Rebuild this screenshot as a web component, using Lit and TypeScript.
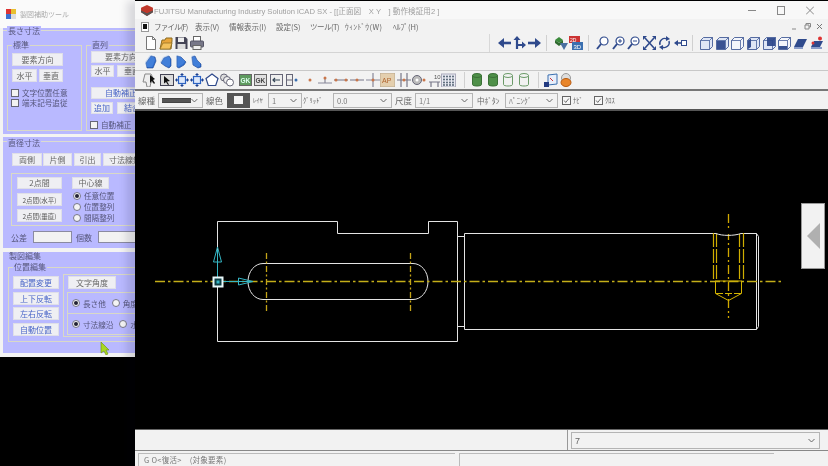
import { LitElement, html, css, svg } from "lit";
import { customElement } from "lit/decorators.js";

const NAVY = "#2f4a8c";
const i = (w: number, body: unknown) =>
  html`<svg class="ic" width=${w} height="14" viewBox="0 0 ${w} 14">${body}</svg>`;

const doc = i(12, svg`<path d="M1.5.5h6l3 3v10h-9z" fill="#fff" stroke="#777"/><path d="M7.5.5v3h3" fill="none" stroke="#777"/>`);
const folder = i(14, svg`<path d="M1 13 3 4h3l1-2h6v3l-1 8z" fill="#e8a53a" stroke="#8a6a20"/><path d="M1 13l3-6h9l-2 6z" fill="#f2c15c" stroke="#8a6a20" stroke-width=".7"/>`);
const floppy = i(13, svg`<path d="M.5 1h10l2 2v10H.5z" fill="#445"/><rect x="3" y="1.5" width="6" height="4.5" fill="#eee"/><rect x="2.5" y="8" width="8" height="5" fill="#ddd"/>`);
const printer = i(14, svg`<rect x="3.5" y=".5" width="7" height="5" fill="#fff" stroke="#666"/><rect x=".5" y="5" width="13" height="6" rx="1" fill="#778" stroke="#556"/><rect x="3" y="9.5" width="8" height="4" fill="#eee" stroke="#666"/>`);

const blob = (d: string) => i(12, svg`<path d=${d} fill="#2f6fd0" stroke="#17408f" stroke-width=".6"/><path d=${d} fill="#6fa7ee" opacity=".3" transform="translate(-1 -1)"/>`);
const blobs = [
  blob("M2 13 1 8l5-7 4 1 1 4-3 7z"),
  blob("M9 1l2 3v7l-2 2-4-2-4-3 3-5z"),
  blob("M2 1l4 1 5 5-2 3-5 3-2-1z"),
  blob("M2 2l3-1 2 4 4 4v3l-3 1-5-3z"),
];

const arrowL = i(14, svg`<path d="M13 7H5" stroke=${NAVY} stroke-width="2.6"/><path d="M0 7l6-5v10z" fill=${NAVY}/>`);
const arrowR = i(14, svg`<path d="M1 7h8" stroke=${NAVY} stroke-width="2.6"/><path d="M14 7 8 2v10z" fill=${NAVY}/>`);
const arrowX = i(13, svg`<path d="M4 13V3M3 9h8" stroke=${NAVY} stroke-width="2.2"/><path d="M4 0 .5 4h7zM13 9l-4-3.5v7z" fill=${NAVY}/>`);
const tree = i(14, svg`<path d="M1 4l4-3 4 3-4 3z" fill="#3b8a3b"/><path d="M1 4v3l4 3V7zM9 4v3l-4 3V7z" fill="#2f6a2f"/><path d="M6 7h8l-4 7z" fill="#4a6fa0"/>`);
const view3d = i(14, svg`<rect y="0" width="11" height="7" fill="#c33"/><rect x="3" y="6" width="11" height="8" fill="#3a6fb0"/><text x="1" y="5.5" font-size="5" fill="#fff" font-family="Liberation Sans">2D</text><text x="4.5" y="12.500" font-size="6" fill="#fff" font-family="Liberation Sans">3D</text>`);
const lens = (inner: unknown) => i(13, svg`<circle cx="8" cy="5" r="4" fill="#fff" stroke=${NAVY} stroke-width="1.2"/><path d="M5 8 1 13" stroke=${NAVY} stroke-width="2"/>${inner}`);
const zoomA = lens("");
const zoomP = lens(svg`<path d="M6 5h4M8 3v4" stroke=${NAVY}/>`);
const zoomM = lens(svg`<path d="M6 5h4" stroke=${NAVY}/>`);
const fit = i(13, svg`<path d="M2 2l9 10M11 2 2 12" stroke=${NAVY} stroke-width="1.6"/><path d="M0 0h4L0 4zM13 0H9l4 4zM0 14h4l-4-4zM13 14H9l4-4z" fill=${NAVY}/>`);
const rot = i(13, svg`<path d="M2 9a5 5 0 0 1 7-6M11 5a5 5 0 0 1-7 6" fill="none" stroke=${NAVY} stroke-width="1.4"/><path d="M8 0l4 3-4 2zM5 14l-4-3 4-2z" fill=${NAVY}/>`);
const back = i(13, svg`<path d="M0 7l4-3v6z" fill=${NAVY}/><path d="M3 7h4" stroke=${NAVY} stroke-width="1.6"/><rect x="7.500" y="4.500" width="5" height="5" fill="#fff" stroke=${NAVY}/>`);
const cube = (fill: string, face: string) => i(13, svg`<path d="M.5 4.500l3-3h9v9l-3 3h-9z" fill=${fill} stroke=${NAVY} stroke-width=".8"/><path d=${face} fill=${NAVY} opacity=".95"/><path d="M.5 4.500h9v9M9.500 4.500l3-3" fill="none" stroke=${NAVY} stroke-width=".7"/>`);
const cubes = [
  cube("#dfe6f5", ""),
  cube("#dfe6f5", "M1 5h8v8H1z"),
  cube("#f4f6fb", ""),
  cube("#dfe6f5", "M1 5l3-3v9l-3 2z"),
  cube("#dfe6f5", "M4 2h8v8H4z"),
  cube("#f4f6fb", "M1 10h8v3H1z"),
];
const book = i(13, svg`<path d="M0 11 4 3h9l-4 8z" fill=${NAVY}/><path d="M0 11h9v2H0z" fill="#8a9cc8"/>`);
const wiz = i(14, svg`<path d="M1 11 4 5h9l-3 6z" fill=${NAVY}/><circle cx="10" cy="2.500" r="2" fill="#d33"/><circle cx="3" cy="7" r="1.500" fill="#d33"/><rect x="1" y="11" width="11" height="2" fill="#8a9cc8"/>`);

const sel1 = i(15, svg`<path d="M3 1h6l1 2 1 6H9l-1 5H5L4 9H1z" fill="#eee" stroke="#888"/><path d="M8 2l5 4-2 1 2 3-1 1-2-3-2 2z" fill="#111"/>`);
const sel2 = i(14, svg`<rect x=".5" y="1.500" width="13" height="11" fill="#ddd" stroke="#445"/><path d="M4 3l6 5-3 .5 2 3-1 .5-2-3-2 1.500z" fill="#111"/>`);
const crossB = i(14, svg`<path d="M7 1v12M1 7h12" stroke="#2d62c0" stroke-width="1.4"/><rect x="3.500" y="3.500" width="7" height="7" fill="#dde8fa" stroke="#2d62c0" stroke-width="1.200"/><path d="M7 0 5 2h4zM7 14l-2-2h4zM0 7l2-2v4zM14 7l-2-2v4z" fill="#1d3f8c"/>`);
const penta = i(14, svg`<path d="M7 1l6 4.500-2.300 7H3.300L1 5.500z" fill="#fff" stroke=${NAVY} stroke-width="1.200"/>`);
const chain = i(14, svg`<circle cx="4" cy="4.500" r="3.500" fill="#ddd" stroke="#667"/><circle cx="7" cy="7" r="3.500" fill="#eee" stroke="#667"/><circle cx="10" cy="9.500" r="3.500" fill="#fff" stroke="#667"/>`);
const gk = (bg: string, fg: string) => i(13, svg`<rect x=".5" y="1.500" width="12" height="11" fill=${bg} stroke="#666"/><text x="1.500" y="10" font-size="6.500" font-weight="700" fill=${fg} font-family="Liberation Sans">GK</text>`);
const boxL = i(13, svg`<rect x=".5" y="1.500" width="12" height="11" fill="#eee" stroke="#667"/><path d="M3 7h7M5 5 3 7l2 2" fill="none" stroke="#345" stroke-width="1.200"/>`);
const boxP = i(13, svg`<rect x=".5" y="1.500" width="6" height="11" fill="#eee" stroke="#667"/><path d="M1 7h5" stroke="#667"/><circle cx="10" cy="7" r="1.500" fill="#3a6fb0"/>`);
const dot = i(4, svg`<circle cx="2" cy="7" r="1.500" fill="#c9764a"/>`);
const lineM = (p: unknown) => i(14, svg`<path d="M0 7h14" stroke="#889" stroke-width="1.200"/>${p}`);
const ld = (x: number) => svg`<circle cx=${x} cy="7" r="1.500" fill="#c9764a"/>`;
const p1 = i(14, svg`<path d="M0 10h14M7 5v5" stroke="#889" stroke-width="1.200"/>${svg`<circle cx="7" cy="5" r="1.500" fill="#c9764a"/>`}`);
const p2 = lineM(svg`${ld(2)}${ld(12)}`);
const p3 = lineM(ld(7));
const p4 = i(14, svg`<path d="M0 7h14M7 0v14" stroke="#889" stroke-width="1.200"/>${ld(7)}`);
const ap = i(15, svg`<rect width="15" height="14" fill="#e4cfae" stroke="#b9a88e"/><text x="2" y="10" font-size="7" fill="#b0642e" font-family="Liberation Sans">AP</text>`);
const p6 = i(14, svg`<path d="M4 0v14M10 0v14M0 7h14" stroke="#778" stroke-width="1.200"/>${ld(7)}`);
const gear = i(14, svg`<circle cx="5" cy="7" r="4.500" fill="#bbb" stroke="#667"/><circle cx="5" cy="7" r="1.500" fill="#fff"/>${ld(12)}`);
const ten = i(13, svg`<path d="M1 9h11M3 9v5M10 9v5" stroke="#778" stroke-width="1.200"/><text x="6" y="6" font-size="6" fill="#555" font-family="Liberation Sans">10</text>`);
const gridI = i(15, svg`<rect x=".5" y="1" width="14" height="13" fill="#e8eaf2" stroke="#aab"/>${[3, 6, 9, 12].flatMap((x) => [3.5, 6.5, 9.5, 12].map((y) => svg`<circle cx=${x} cy=${y} r=".9" fill="#456"/>`))}`);
const cyl = (fill: string, st: string) => i(10, svg`<path d="M.5 2.500v9c0 2 9 2 9 0v-9z" fill=${fill} stroke=${st}/><ellipse cx="5" cy="2.500" rx="4.500" ry="2" fill=${fill} stroke=${st}/>`);
const flag = i(14, svg`<path d="M4 2l9-1v10l-9 1z" fill="#e8eefa" stroke="#3a6fb0"/><rect x="0" y="9" width="5" height="5" fill="#223a80"/><path d="M6 5l3 3" stroke="#c33"/>`);
const bulb = i(12, svg`<circle cx="6" cy="5" r="4.500" fill="#ddd" stroke="#999"/><ellipse cx="6" cy="9.500" rx="5" ry="4" fill="#e8852a" stroke="#b85a10"/>`);

const chev = html`<svg class="chev" width="7" height="5" viewBox="0 0 7 5"><path d="M.5 1 3.500 4l3-3" fill="none" stroke="#666"/></svg>`;

@customElement("app-root")
export class AppRoot extends LitElement {
  static styles = css`
    :host { display: block; position: relative; width: 828px; height: 466px; background: #000; overflow: hidden; filter: blur(0.3px);
      font-family: "Noto Sans CJK JP", "Liberation Sans", sans-serif; font-size: 8px; color: #666; }
    .ic { display: block; flex: none; }

    /* helper window */
    .tool { position: absolute; left: 0; top: 0; width: 135px; height: 357px; background: #f3f3f3; overflow: hidden; display: flex; flex-direction: column; }
    .ttl { height: 28px; flex: none; background: #fafafa; display: flex; align-items: center; padding-left: 6px; gap: 4px; color: #aaa; font-size: 7px; box-sizing: border-box; }
    .sec { margin-left: 3px; width: 200px; background: #b9b9ff; flex: none; box-sizing: border-box; position: relative; }
    .s1 { height: 106px; padding: 2px 0 0; }
    .s2 { height: 111px; margin-top: 3px; padding-top: 4px; }
    .s3 { height: 101px; margin-top: 4px; padding-top: 15px; }
    .topl { border-top: 1px solid #dcdccf; }
    .lg { position: absolute; background: #b9b9ff; padding: 0 1px; line-height: 10px; white-space: nowrap; color: #55557a; }
    .lgs1 { left: 4px; top: -2px; }
    .lgs2 { left: 4px; top: 1px; }
    .lgs3 { left: 5px; top: -1px; background: none; }
    .lgi { left: 4px; top: -6px; }
    .grp { position: relative; border: 1px solid #d9d9c6; box-sizing: border-box; }
    .row { display: flex; }
    .col { display: flex; flex-direction: column; }
    .b { height: 13px; flex: none; background: #efeff3; border: 1px solid #dfdfe8; box-sizing: border-box; display: flex; align-items: center; justify-content: center; white-space: nowrap; font-size: 8px; line-height: 10px; color: #666; overflow: hidden; }
    .blue { color: #4a66c8; }
    .tiny { font-size: 6.500px; color: #555; }
    .h12 { height: 12px; }
    .cb { width: 8px; height: 8px; background: #f2f2f2; border: 1px solid #667; box-sizing: border-box; flex: none; }
    .opt { display: flex; align-items: center; gap: 3px; white-space: nowrap; height: 9px; line-height: 9px; font-size: 7.600px; color: #55557a; }
    .opts { gap: 1px; }
    .rd { width: 8px; height: 8px; border-radius: 50%; background: #f4f4f4; border: 1px solid #778; box-sizing: border-box; flex: none; position: relative; }
    .rd.on::after { content: ""; position: absolute; inset: 1px; border-radius: 50%; background: #223; }
    .rd.nx { margin-left: 3px; }

    .std { margin: 14px 0 0 4px; width: 75px; height: 86px; padding: 7px 0 0 4px; flex: none; }
    .ser { margin: 14px 0 0 4px; width: 100px; height: 86px; padding: 5px 0 0 4px; flex: none; }
    .w51 { width: 51px; } .w25 { width: 25px; } .w24 { width: 24px; margin-left: 2px; }
    .w60 { width: 60px; } .w23 { width: 23px; } .w30 { width: 30px; margin-left: 3px; }
    .w22 { width: 22px; } .w30b { width: 30px; margin-left: 4px; }
    .mt3 { margin-top: 3px; } .mt2 { margin-top: 2px; } .mt10 { margin-top: 10px; } .mt6 { margin-top: 6px; }
    .nudge { margin-left: -1px; }

    .dia { padding-left: 9px; margin-top: 11px; }
    .t30 { width: 30px; } .t29 { width: 29px; margin-left: 1px; } .t27 { width: 27px; margin-left: 2px; } .t40 { width: 44px; margin-left: 2px; }
    .inner { margin: 7px 0 0 8px; height: 53px; padding: 3px 0 0 5px; border-right: 0; }
    .c45 { width: 45px; flex: none; }
    .c45 .b { width: 45px; }
    .c45 .m4 { margin-top: 4px; } .c45 .m3 { margin-top: 3px; }
    .c2 { margin-left: 10px; }
    .w37 { width: 37px; }
    .rads { margin: 2px 0 0 1px; gap: 2px; }
    .tol { margin: 5px 0 0 8px; display: flex; align-items: center; height: 12px; color: #55557a; }
    .inp { height: 12px; background: #f2f2f2; border: 1px solid #8a8aa0; box-sizing: border-box; flex: none; }
    .i39 { width: 39px; margin: 0 4px 0 6px; } .i60 { width: 60px; margin-left: 6px; }

    .pos { margin: 0 0 0 5px; height: 75px; padding: 8px 0 0 4px; display: flex; }
    .w46 { width: 46px; }
    .gap3 { gap: 3px; }
    .up1 { margin-top: -1px; }
    .rt { margin: -2px 0 0 4px; width: 100px; height: 63px; padding: 1px 0 0 4px; }
    .w48 { width: 48px; }
    .sub { margin: 3px 0 0 -1px; height: 22px; padding-left: 4px; display: flex; align-items: center; gap: 3px; white-space: nowrap; font-size: 7.600px; color: #55557a; }
    .sub + .sub { margin-top: 0; height: 21px; border-top: 0; }
    .cursor { position: absolute; left: 100px; top: 341px; }

    /* main window */
    .main { position: absolute; left: 135px; top: 1px; width: 693px; height: 465px; background: #f2f2f2; display: flex; flex-direction: column; box-shadow: -8px 0 8px rgba(0, 0, 30, 0.13); }
    .mt { height: 18px; flex: none; background: #f8f8f8; display: flex; align-items: center; padding-left: 6px; box-sizing: border-box; color: #a0a0a0; font-family: "Liberation Sans", "Noto Sans CJK JP", sans-serif; font-size: 7.650px; white-space: nowrap; }
    .mt .lab { margin-left: 1px; flex: 1; }
    .wb { display: flex; width: 80px; flex: none; justify-content: space-between; padding-right: 14px; box-sizing: border-box; }
    .menu { height: 15px; flex: none; display: flex; align-items: center; padding-left: 6px; white-space: nowrap; }
    .menu .mi { margin-right: 5px; flex: none; }
    .menu span { flex: none; color: #666; font-size: 7.500px; }
    .m41 { width: 41px; letter-spacing: -0.800px; } .m34 { width: 34px; } .m47 { width: 47px; } .m35 { width: 35px; letter-spacing: -0.500px; } .m48 { width: 48px; letter-spacing: 0.400px; } .m30 { width: 30px; }
    .mdi { margin-left: auto; display: flex; gap: 5px; padding-right: 5px; }
    .tb { flex: none; display: flex; align-items: center; box-sizing: border-box; }
    .r1 { height: 19px; padding-left: 10px; border-bottom: 1px solid #d4d4d4; }
    .r2 { height: 18px; padding-left: 10px; gap: 3px; border-bottom: 1px solid #c8c8c8; }
    .r3 { height: 20px; padding-left: 7px; border-bottom: 2px solid #777; }
    .pr { height: 20px; padding-left: 3px; border-bottom: 2px solid #555; }
    .sp1 { margin-left: 1px; } .sp2 { margin-left: 2px; } .sp3 { margin-left: 3px; } .sp5 { margin-left: 5px; } .sp6 { margin-left: 6px; } .sp9 { margin-left: 9px; }
    .grow { flex: 1; }
    .hgrp { display: flex; align-items: center; height: 100%; padding-left: 8px; border-left: 1px solid #d8d8d8; width: 339px; box-sizing: border-box; }
    .sep { width: 1px; height: 16px; background: #d0d0d0; flex: none; margin: 0 7px 0 5px; }
    .sepa { margin: 0 7px 0 8px; }
    .sepb { margin: 0 5px 0 9px; }
    .gg { display: flex; align-items: center; }
    .g1 { gap: 1px; } .g2 { gap: 2px; }
    .g26 { gap: 2.600px; }
    .g27 { gap: 2.700px; }
    .g55 { gap: 5.500px; }
    .lt { flex: none; white-space: nowrap; color: #666; font-size: 8.500px; padding-left: 3px; box-sizing: border-box; overflow: hidden; }
    .l20 { width: 20px; padding-left: 0; } .l24 { width: 24px; } .l18 { width: 18px; font-size: 6.500px; }
    .l31 { width: 31px; font-size: 6.500px; padding-left: 1px; } .l23 { width: 23px; } .l32 { width: 32px; font-size: 7.500px; padding-left: 4px; }
    .l23b { width: 23px; font-size: 6.500px; padding-left: 2px; }
    .sel { height: 15px; flex: none; background: #f2f2f2; border: 1px solid #b4b4b4; box-sizing: border-box; display: flex; align-items: center; justify-content: space-between; padding: 0 4px 0 3px; color: #777; font-size: 7.500px; white-space: nowrap; }
    .w45 { width: 45px; padding-left: 3px; } .w34 { width: 34px; } .w59 { width: 59px; } .w58 { width: 58px; } .w53 { width: 53px; }
    .ln { width: 30px; height: 5px; background: #555; border: 1px solid #444; border-left: 0; border-right: 0; box-sizing: border-box; }
    .sw { width: 23px; height: 15px; background: #555; display: flex; align-items: center; justify-content: center; flex: none; }
    .sw i { display: block; width: 9px; height: 8px; background: #f4f4f4; }
    .pcb { width: 9px; height: 9px; background: #f6f6f6; border: 1px solid #666; box-sizing: border-box; flex: none; margin-left: 4px; display: block; }
    .pcb.n { margin-left: 0; }

    .canvas { flex: 1; min-height: 0; background: #000; position: relative; }
    .canvas svg { display: block; }
    .tab { position: absolute; right: 3px; top: 92px; width: 24px; height: 66px; box-sizing: border-box; background: #f2f2f2; border: 1px solid #999; display: flex; align-items: center; padding-left: 5px; }

    .bot { height: 21px; flex: none; border-top: 1px solid #666; display: flex; background: #f2f2f2; box-sizing: border-box; }
    .bot .l { width: 432px; border-right: 1px solid #999; flex: none; }
    .bot .sel { width: 249px; height: 17px; margin: 2px 0 0 3px; font-family: "Liberation Sans", sans-serif; font-size: 9px; color: #666; }
    .st { height: 16px; flex: none; border-top: 1px solid #888; display: flex; padding: 2px 0 0 3px; background: #f2f2f2; box-sizing: border-box; }
    .st div { border-top: 1px solid #bbb; box-sizing: border-box; height: 14px; flex: none; }
    .st .a { width: 317px; border-left: 1px solid #bbb; padding-left: 5px; font-size: 7.500px; line-height: 11px; letter-spacing: 0.300px; color: #777; white-space: pre; }
    .st .c { width: 315px; margin-left: 4px; border-left: 1px solid #bbb; }
  `;

  private leftWindow() {
    return html`<div class="tool">
      <div class="ttl">
        <svg width="10" height="10" viewBox="0 0 10 10"><rect width="5" height="5" fill="#d33"/><rect x="5" width="5" height="5" fill="#e8c030"/><rect y="5" width="5" height="5" fill="#3a6fd0"/><rect x="5" y="5" width="5" height="5" fill="#ddd"/></svg>
        <span>製図補助ツール</span>
      </div>

      <div class="sec s1">
        <div class="topl"></div><div class="lg lgs1">長さ寸法</div>
        <div class="row">
          <div class="grp std">
            <div class="lg lgi">標準</div>
            <div class="b w51">要素方向</div>
            <div class="row mt3"><div class="b w25">水平</div><div class="b w24">垂直</div></div>
            <div class="col mt6 nudge opts">
              <div class="opt"><span class="cb"></span>文字位置任意</div>
              <div class="opt"><span class="cb"></span>端末記号追従</div>
            </div>
          </div>
          <div class="grp ser">
            <div class="lg lgi">直列</div>
            <div class="b w60 h12">要素方向</div>
            <div class="row mt2"><div class="b w23 h12">水平</div><div class="b w30 h12">垂直</div></div>
            <div class="b w60 h12 mt10 blue">自動補正</div>
            <div class="row mt3"><div class="b w22 h12 blue">追加</div><div class="b w30b h12 blue">結合</div></div>
            <div class="opt mt6 nudge"><span class="cb"></span>自動補正</div>
          </div>
        </div>
      </div>

      <div class="sec s2">
        <div class="topl"></div><div class="lg lgs2">直径寸法</div>
        <div class="row dia">
          <div class="b t30">両側</div><div class="b t29">片側</div><div class="b t27">引出</div><div class="b t40">寸法線無</div>
        </div>
        <div class="grp inner row">
          <div class="col c45">
            <div class="b h12">2点間</div>
            <div class="b tiny m4">2点間(水平)</div>
            <div class="b tiny m3">2点間(垂直)</div>
          </div>
          <div class="col c2">
            <div class="b w37 h12">中心線</div>
            <div class="col rads">
              <div class="opt"><span class="rd on"></span>任意位置</div>
              <div class="opt"><span class="rd"></span>位置整列</div>
              <div class="opt"><span class="rd"></span>間隔整列</div>
            </div>
          </div>
        </div>
        <div class="tol">公差<span class="inp i39"></span>個数<span class="inp i60"></span></div>
      </div>

      <div class="sec s3">
        <div class="lg lgs3">製図編集</div>
        <div class="grp pos">
          <div class="lg lgi">位置編集</div>
          <div class="col w46 gap3">
            <div class="b w46 blue">配置変更</div>
            <div class="b w46 blue">上下反転</div>
            <div class="b w46 blue up1">左右反転</div>
            <div class="b w46 blue">自動位置</div>
          </div>
          <div class="grp rt">
            <div class="b w48">文字角度</div>
            <div class="grp sub"><span class="rd on"></span>長さ他<span class="rd nx"></span>角度</div>
            <div class="grp sub"><span class="rd on"></span>寸法線沿<span class="rd nx"></span>水平</div>
          </div>
        </div>
      </div>
    </div>`;
  }

  private canvas() {
    const white = "#e4e4e4";
    const gold = "#c4ae18";
    return html`<div class="canvas">
      <svg width="693" height="319" viewBox="135 111 693 319" fill="none">
        <path stroke=${white} d="M217.500 221.500H337.500V233.500H428.500V221.500H457.500V341.500H217.500Z"/>
        <path stroke=${white} d="M458 236.500H464.500M458 326.500H464.500"/>
        <path stroke=${white} d="M464.500 329.500V233.500H756.500L758.500 236.500V326.500L756.500 329.500H464.500M756.500 233.500V329.500"/>
        <path stroke=${white} d="M263 263.500H413A15 18 0 0 1 413 299.500H263A15 18 0 0 1 263 263.500Z"/>
        <path stroke=${gold} stroke-width="1.300" stroke-dasharray="10 3 2.500 3" d="M155 281.500H781"/>
        <path stroke="#c4a418" stroke-width="1.300" stroke-dasharray="6 2.500 2 2.500" d="M266.500 253V311M410.500 253V311"/>
        <path stroke="#d0a800" stroke-width="1.300" stroke-dasharray="9 3 2 3" d="M728.500 214V318"/>
        <path stroke="#d0ae00" stroke-width="1.200" stroke-dasharray="14 2" d="M713.500 233V281M716.500 233V281M739.500 233V281M743.500 233V281"/>
        <path stroke="#d4b400" d="M715 281H742M715.500 281V293.500L728.500 300.500L741.500 293.500V281"/>
        <path stroke="#d4b400" stroke-dasharray="7 2" d="M716 293.500H741"/>
        <path stroke="#000" stroke-width="3" d="M716 232.500H741"/>
        <path stroke=${white} d="M716 233.500C722 236 734 236 741 233.500"/>
        <path stroke="#35b6c4" d="M217.500 277V250M222 281.500H253M217.500 247L213.500 262H221.500ZM238.500 278V285L253 281.500Z"/>
        <rect x="213.500" y="277.500" width="9" height="9" stroke="#e8f8fa" stroke-width="2" fill="#0b3a40"/>
        <rect x="216.500" y="280.500" width="3" height="3" fill="#35b6c4"/>
      </svg>
      <div class="tab"><svg width="13" height="26" viewBox="0 0 13 26"><path d="M13 0V26L0 13Z" fill="#b0b0b0"/></svg></div>
    </div>`;
  }

  render() {
    return html`
      ${this.leftWindow()}
      <svg class="cursor" width="10" height="14" viewBox="0 0 10 14"><path d="M1 1v11l3-2 2 4 2-1-2-4h3z" fill="#a8d820" stroke="#6a8a10" stroke-width=".6"/></svg>
      <div class="main">
        <div class="mt">
          <svg width="12" height="11" viewBox="0 0 13 12"><path d="M6.500 0 13 3v5l-6.500 4L0 8V3z" fill="#c0392b"/><path d="M0 6l6.500 3L13 6v2l-6.500 4L0 8z" fill="#555"/></svg>
          <span class="lab">FUJITSU Manufacturing Industry Solution iCAD SX - [[正面図　X Y　] 動作検証用2 ]</span>
          <div class="wb">
            <svg width="8" height="9" viewBox="0 0 8 9"><path d="M0 4.500h8" stroke="#888"/></svg>
            <svg width="8" height="9" viewBox="0 0 8 9"><rect x=".5" y=".5" width="7" height="8" fill="none" stroke="#888"/></svg>
            <svg width="8" height="9" viewBox="0 0 8 9"><path d="M0 .5l8 8M8 .5l-8 8" stroke="#888"/></svg>
          </div>
        </div>
        <div class="menu">
          <svg class="mi" width="8" height="10" viewBox="0 0 8 10"><rect x=".5" y=".5" width="7" height="9" fill="#fff" stroke="#999"/><rect x="2" y="2" width="4" height="5" fill="#111"/></svg>
          <span class="m41">ファイル(F)</span><span class="m34">表示(V)</span><span class="m47">情報表示(I)</span><span class="m34">設定(S)</span><span class="m35">ツール(T)</span><span class="m48">ｳｨﾝﾄﾞｳ(W)</span><span class="m30">ﾍﾙﾌﾟ(H)</span>
          <div class="mdi">
            <svg width="7" height="7" viewBox="0 0 7 7"><path d="M0 6h4" stroke="#888"/></svg>
            <svg width="7" height="7" viewBox="0 0 7 7"><path d="M1 2h4v4H1zM2 2V.5h4.500V4H5" fill="none" stroke="#888"/></svg>
            <svg width="7" height="7" viewBox="0 0 7 7"><path d="M1 1l5 5M6 1 1 6" stroke="#777"/></svg>
          </div>
        </div>
        <div class="tb r1">
          <div class="gg g2">${doc}${folder}${floppy}${printer}</div>
          <div class="grow"></div>
          <div class="hgrp">
            <div class="gg g1">${arrowL}${arrowX}${arrowR}</div>
            <div class="sep"></div>
            <div class="gg g1">${tree}${view3d}</div>
            <div class="sep"></div>
            <div class="gg g26">${zoomA}${zoomP}${zoomM}${fit}${rot}${back}</div>
            <div class="sep"></div>
            <div class="gg g27">${cubes}${book}${wiz}</div>
          </div>
        </div>
        <div class="tb r2">${blobs}</div>
        <div class="tb r3">
          ${sel1}<span class="sp3"></span>${sel2}<span class="sp1"></span>${crossB}<span class="sp1"></span>${crossB}<span class="sp1"></span>${penta}<span class="sp1"></span>${chain}<span class="sp5"></span>${gk("#5e9a5e", "#dfe")}<span class="sp2"></span>${gk("#e0e0e0", "#444")}<span class="sp3"></span>${boxL}<span class="sp3"></span>${boxP}<span class="sp9"></span>${dot}<span class="sp6"></span>${p1}<span class="sp2"></span>${p2}<span class="sp2"></span>${p3}<span class="sp2"></span>${p4}${ap}<span class="sp2"></span>${p6}<span class="sp1"></span>${gear}<span class="sp2"></span>${ten}${gridI}
          <span class="sep sepa"></span>
          <div class="gg g55">${cyl("#4e8f48", "#3a7036")}${cyl("#4e8f48", "#3a7036")}${cyl("#f2f2f2", "#6b9a68")}${cyl("#f2f2f2", "#6b9a68")}</div>
          <span class="sep sepb"></span>
          ${flag}<span class="sp2"></span>${bulb}
        </div>
        <div class="tb pr">
          <span class="lt l20">線種</span>
          <div class="sel w45"><span class="ln"></span>${chev}</div>
          <span class="lt l24">線色</span>
          <div class="sw"><i></i></div>
          <span class="lt l18">ﾚｲﾔ</span>
          <div class="sel w34"><span>1</span>${chev}</div>
          <span class="lt l31">ｸﾞﾘｯﾄﾞ</span>
          <div class="sel w59"><span>0.0</span>${chev}</div>
          <span class="lt l23">尺度</span>
          <div class="sel w58"><span>1/1</span>${chev}</div>
          <span class="lt l32">中ﾎﾞﾀﾝ</span>
          <div class="sel w53"><span>ﾊﾟﾆﾝｸﾞ</span>${chev}</div>
          <svg class="pcb" viewBox="0 0 9 9"><path d="M1.500 4.500l2 2.500 4-5" fill="none" stroke="#444"/></svg>
          <span class="lt l23b">ﾅﾋﾞ</span>
          <svg class="pcb n" viewBox="0 0 9 9"><path d="M1.500 4.500l2 2.500 4-5" fill="none" stroke="#444"/></svg>
          <span class="lt l23b">ｸﾛｽ</span>
        </div>
        ${this.canvas()}
        <div class="bot">
          <div class="l"></div>
          <div class="sel"><span>7</span>${chev}</div>
        </div>
        <div class="st">
          <div class="a">G O&lt;復活&gt;　(対象要素)</div>
          <div class="c"></div>
        </div>
      </div>
    `;
  }
}
